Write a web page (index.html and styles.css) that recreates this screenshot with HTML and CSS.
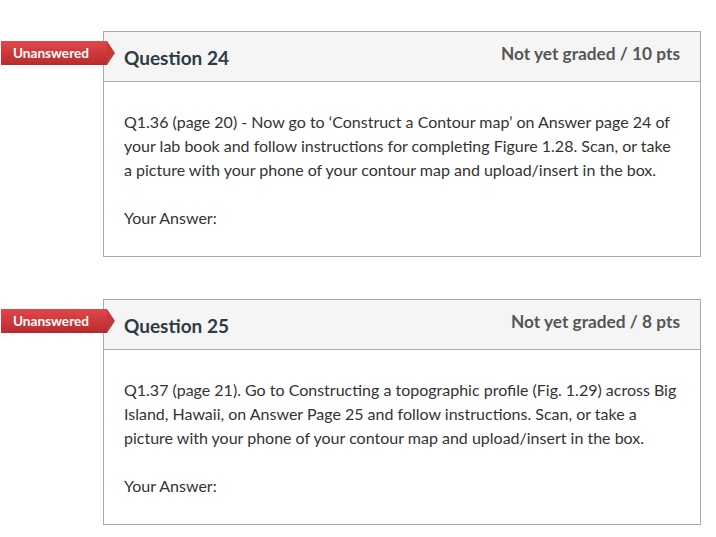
FILE: index.html
```html
<!DOCTYPE html>
<html>
<head>
<meta charset="utf-8">
<link rel="stylesheet" href="styles.css">
</head>
<body>
<div class="page">
  <div class="question">
    <div class="badge">Unanswered</div>
    <div class="q-header">
      <span class="q-name">Question 24</span>
      <span class="q-points">Not yet graded / 10 pts</span>
    </div>
    <div class="q-body">
      <p class="q-text">Q1.36 (page 20) - Now go to ‘Construct a Contour map’ on Answer page 24 of your lab book and follow instructions for completing Figure 1.28. Scan, or take a picture with your phone of your contour map and upload/insert in the box.</p>
      <p class="q-answer">Your Answer:</p>
    </div>
  </div>
  <div class="question">
    <div class="badge">Unanswered</div>
    <div class="q-header">
      <span class="q-name">Question 25</span>
      <span class="q-points">Not yet graded / 8 pts</span>
    </div>
    <div class="q-body">
      <p class="q-text">Q1.37 (page 21). Go to Constructing a topographic profile (Fig. 1.29) across Big Island, Hawaii, on Answer Page 25 and follow instructions. Scan, or take a picture with your phone of your contour map and upload/insert in the box.</p>
      <p class="q-answer">Your Answer:</p>
    </div>
  </div>
</div>
</body>
</html>
```

FILE: styles.css
```css
html, body {
  margin: 0;
  padding: 0;
  background: #fff;
}
body {
  font-family: Lato, "Open Sans", sans-serif;
  color: #2d3b45;
}
.page {
  padding: 31px 15px 0 103px;
  display: flex;
  flex-direction: column;
  gap: 42px;
}
.question {
  position: relative;
  border: 1px solid #aaaaaa;
  width: 596px;
}
.badge {
  position: absolute;
  left: -103px;
  top: 9px;
  width: 106px;
  height: 24px;
  padding-left: 12px;
  box-sizing: border-box;
  background: linear-gradient(#e2474a, #b72b2d);
  color: #fff;
  font-weight: 700;
  font-size: 13.6px;
  line-height: 24px;
}
.badge::after {
  content: "";
  position: absolute;
  right: -8px;
  top: 0;
  width: 0;
  height: 0;
  border-top: 12px solid transparent;
  border-bottom: 12px solid transparent;
  border-left: 8px solid #c93739;
}
.q-header {
  height: 49px;
  background: #f5f5f5;
  border-bottom: 1px solid #aaaaaa;
  display: flex;
  justify-content: space-between;
  align-items: center;
  padding: 0 20px 0 20px;
}
.q-name {
  font-weight: 700;
  font-size: 19px;
  color: #2d3b45;
  margin-top: 2px;
}
.q-points {
  font-weight: 700;
  font-size: 17.3px;
  color: #555;
  margin-top: -6px;
}
.q-body {
  padding: 28px 20px 26px 20px;
  font-size: 16px;
  line-height: 24px;
  color: #333;
}
.q-body p {
  margin: 0;
}
.q-text {
  margin-bottom: 24px !important;
}
```
